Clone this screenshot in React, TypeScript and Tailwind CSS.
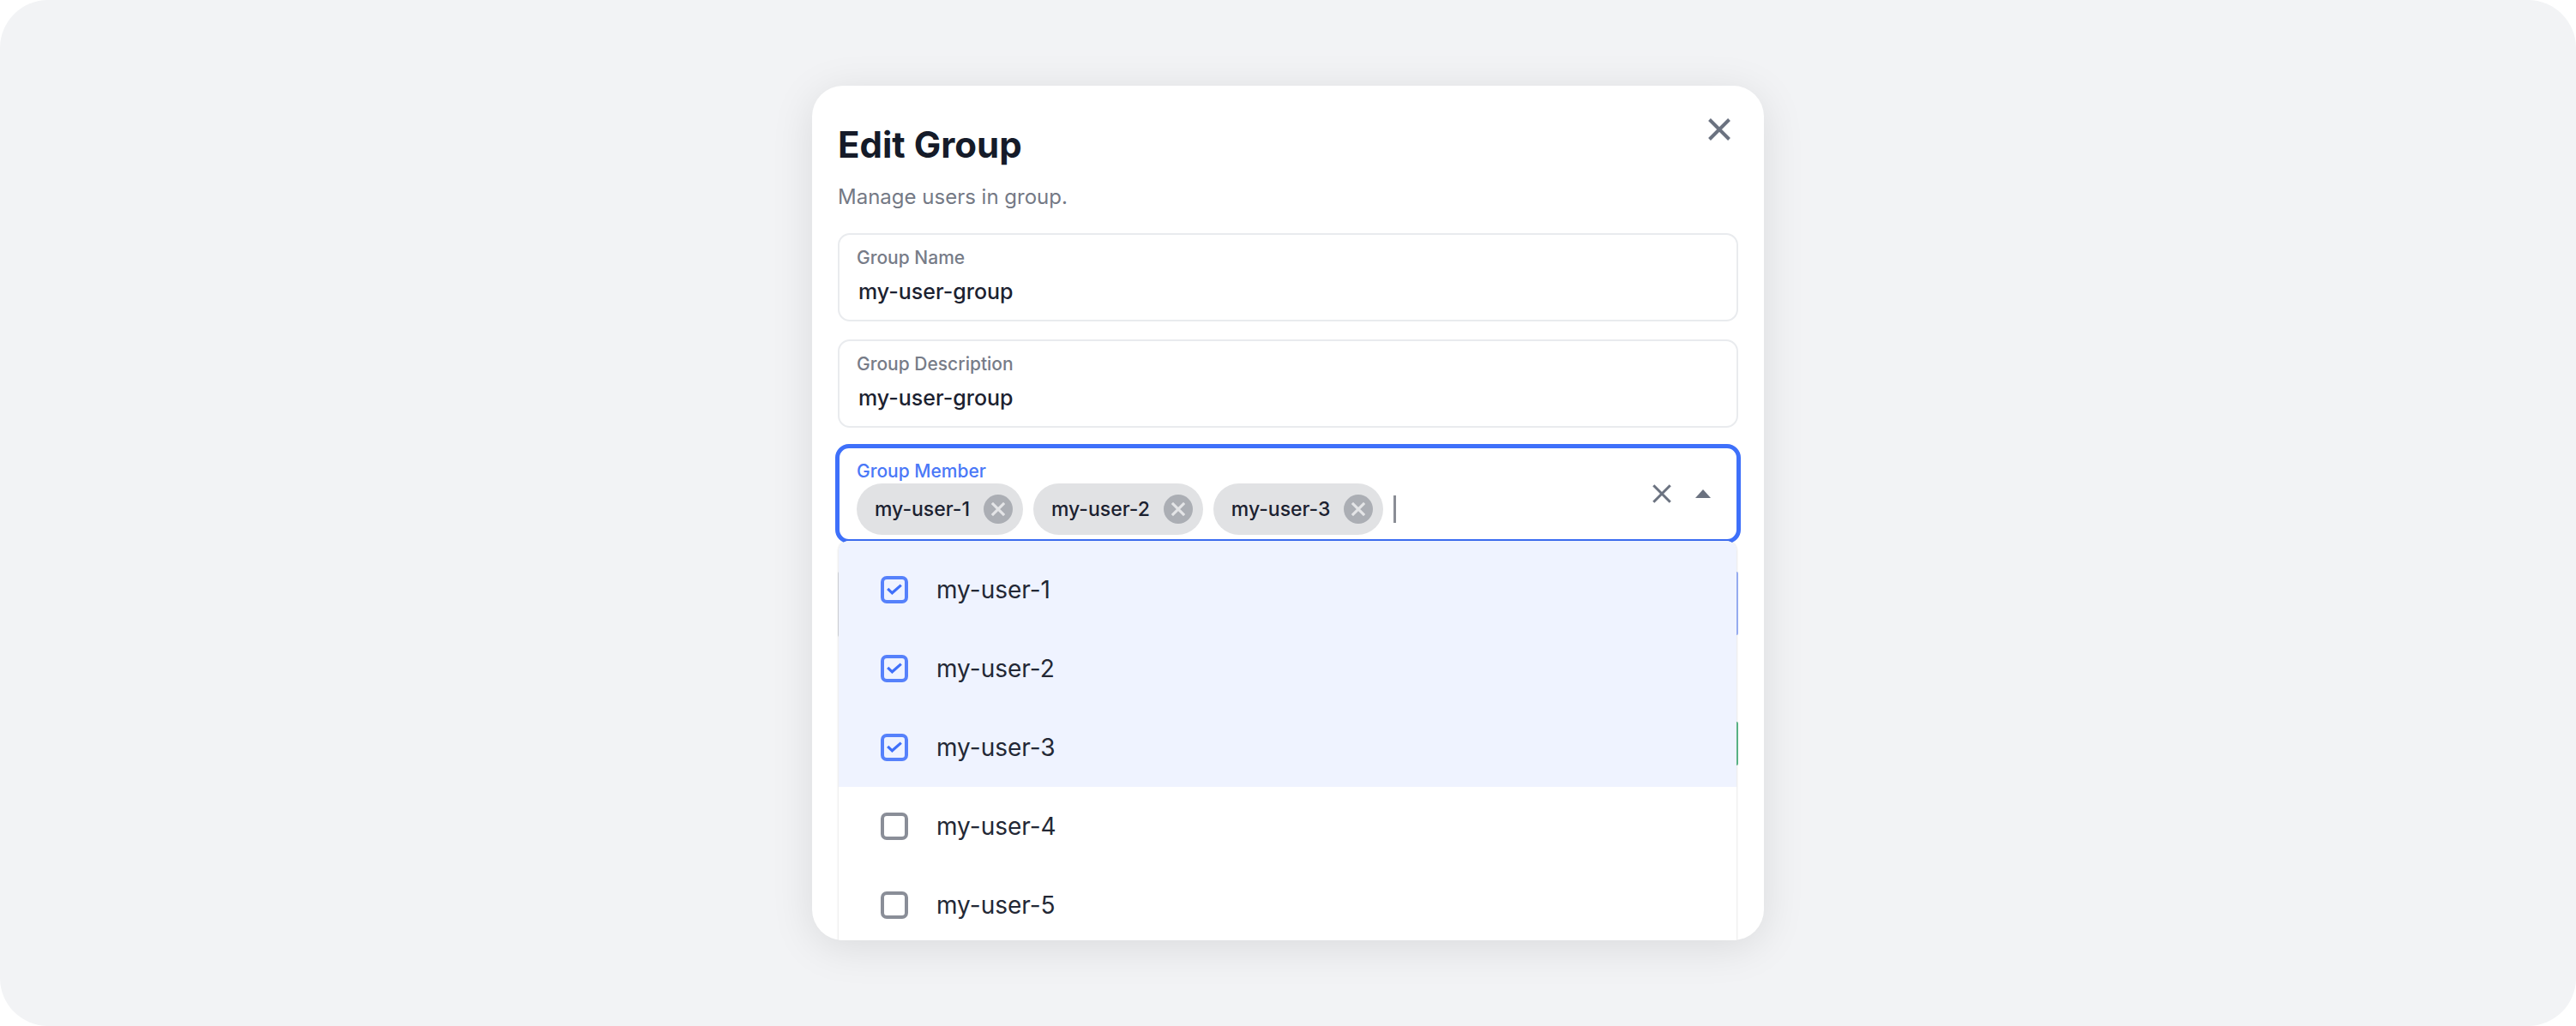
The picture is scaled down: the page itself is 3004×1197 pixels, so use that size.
import React, { useState } from 'react';

const users = ['my-user-1', 'my-user-2', 'my-user-3', 'my-user-4', 'my-user-5'];

const CrossIcon = ({ className }: { className: string }) => (
  <svg viewBox="0 0 26 26" fill="none" stroke="currentColor" className={className} aria-hidden="true">
    <path d="M1.5 1.5 24.5 24.5M24.5 1.5 1.5 24.5" />
  </svg>
);

type FieldProps = {
  id: string;
  label: string;
  value: string;
  onChange: (value: string) => void;
};

const Field = ({ id, label, value, onChange }: FieldProps) => (
  <div className="flex flex-col gap-[7px] rounded-[14px] border-2 border-[#e9ebee] px-5 pt-[13px] pb-[15px]">
    <label htmlFor={id} className="text-[21px] leading-7 font-medium text-[#777c88]">
      {label}
    </label>
    <input
      id={id}
      type="text"
      value={value}
      onChange={(e) => onChange(e.target.value)}
      className="h-9 w-full px-0.5 text-[25px] leading-9 font-medium text-[#1b2130] outline-none"
    />
  </div>
);

type ChipProps = {
  name: string;
  onRemove: () => void;
};

const Chip = ({ name, onRemove }: ChipProps) => (
  <span className="flex h-[60px] items-center gap-4 rounded-full bg-[#e1e2e4] pr-3 pl-[21px] text-[23px] font-medium text-[#1b2130]">
    {name}
    <button
      type="button"
      aria-label={`Remove ${name}`}
      onClick={onRemove}
      className="flex size-[34px] items-center justify-center rounded-full bg-[#abaeb4] text-[#e4e5e7]"
    >
      <CrossIcon className="size-4 stroke-[5]" />
    </button>
  </span>
);

type OptionProps = {
  name: string;
  checked: boolean;
  onToggle: () => void;
};

const Option = ({ name, checked, onToggle }: OptionProps) => (
  <li className={`first:pt-[11px] ${checked ? 'bg-[#eff3ff]' : 'bg-white'}`}>
    <label className="flex h-[92px] items-center gap-[33px] pl-[49px] text-[28px] text-[#232835]">
      <span className="grid size-8">
        <input
          type="checkbox"
          checked={checked}
          onChange={onToggle}
          className="peer col-start-1 row-start-1 size-8 appearance-none rounded-[7px] border-4 border-[#8a8e98] checked:border-[#5681fb]"
        />
        <svg
          viewBox="0 0 32 32"
          fill="none"
          stroke="#3f70fa"
          strokeWidth="3.2"
          className="pointer-events-none invisible col-start-1 row-start-1 size-8 peer-checked:visible"
          aria-hidden="true"
        >
          <path d="M8.2 14.8 13.4 19.8 23.8 10.6" />
        </svg>
      </span>
      {name}
    </label>
  </li>
);

const App = () => {
  const [name, setName] = useState('my-user-group');
  const [description, setDescription] = useState('my-user-group');
  const [selected, setSelected] = useState(users.slice(0, 3));

  const toggle = (user: string) => {
    setSelected(selected.includes(user) ? selected.filter((u) => u !== user) : [...selected, user]);
  };

  return (
    <main className="flex justify-center rounded-[56px] bg-[#f2f3f5] px-8 py-[100px] font-['Inter',sans-serif]">
      <section
        role="dialog"
        aria-labelledby="title"
        className="w-full max-w-[1110px] overflow-hidden rounded-[36px] bg-white px-[30px] pt-[29px] shadow-[0_8px_50px_rgba(0,0,0,0.1)]"
      >
        <header className="flex items-start justify-between">
          <div className="pt-2">
            <h1 id="title" className="text-[42px] leading-[64px] font-bold text-[#151b29]">
              Edit Group
            </h1>
            <p className="mt-2 text-2xl leading-[42px] text-[#747985]">Manage users in group.</p>
          </div>
          <button type="button" aria-label="Close" className="flex size-11 items-center justify-center text-[#6b7280]">
            <CrossIcon className="size-[26px] stroke-[4]" />
          </button>
        </header>

        <div className="mt-[21px] flex flex-col gap-[21px]">
          <Field id="group-name" label="Group Name" value={name} onChange={setName} />
          <Field id="group-description" label="Group Description" value={description} onChange={setDescription} />

          <div className="-mx-[3px] -mt-[2px] flex items-center rounded-[16px] border-[5px] border-[#3e70fa] pr-[15px] pl-5">
            <div className="min-w-0 flex-1 pt-[13px] pb-[5px]">
              <label htmlFor="group-member" className="block text-[21px] leading-7 font-medium text-[#4a78f7]">
                Group Member
              </label>
              <div className="flex items-center gap-3">
                {selected.map((user) => (
                  <Chip key={user} name={user} onRemove={() => toggle(user)} />
                ))}
                <div className="flex flex-1 items-center">
                  <span className="h-8 w-[3px] bg-[#8a8d95]" />
                  <input id="group-member" type="text" className="h-9 w-full min-w-0 text-[25px] caret-transparent outline-none" />
                </div>
              </div>
            </div>
            <button
              type="button"
              aria-label="Clear"
              onClick={() => setSelected([])}
              className="flex size-12 items-center justify-center text-[#6b7280]"
            >
              <CrossIcon className="size-[22px] stroke-[3.6]" />
            </button>
            <button type="button" aria-label="Close list" className="flex size-12 items-center justify-center text-[#6b7280]">
              <svg viewBox="0 0 18 10" fill="currentColor" className="h-[10px] w-[18px]" aria-hidden="true">
                <path d="M9 0 18 10H0z" />
              </svg>
            </button>
          </div>
        </div>

        {/* the open list covers the add row and the save button, only their edges show */}
        <div className="relative -mt-[3px]">
          <span className="absolute top-9 left-0 h-[76px] w-[2px] rounded-l bg-[#d9dbdf]" />
          <span className="absolute top-9 right-0 h-[74px] w-[2px] rounded-r bg-[#9cb3fa]" />
          <span className="absolute top-[211px] right-0 h-[51px] w-[2px] rounded-r bg-[#5cb98a]" />
          <ul className="relative mr-[2px] ml-px max-h-[466px] overflow-hidden rounded-t-[12px] bg-white shadow-[0_0_3px_rgba(0,0,0,0.18)]">
            {users.map((user) => (
              <Option key={user} name={user} checked={selected.includes(user)} onToggle={() => toggle(user)} />
            ))}
          </ul>
        </div>
      </section>
    </main>
  );
};

export default App;
